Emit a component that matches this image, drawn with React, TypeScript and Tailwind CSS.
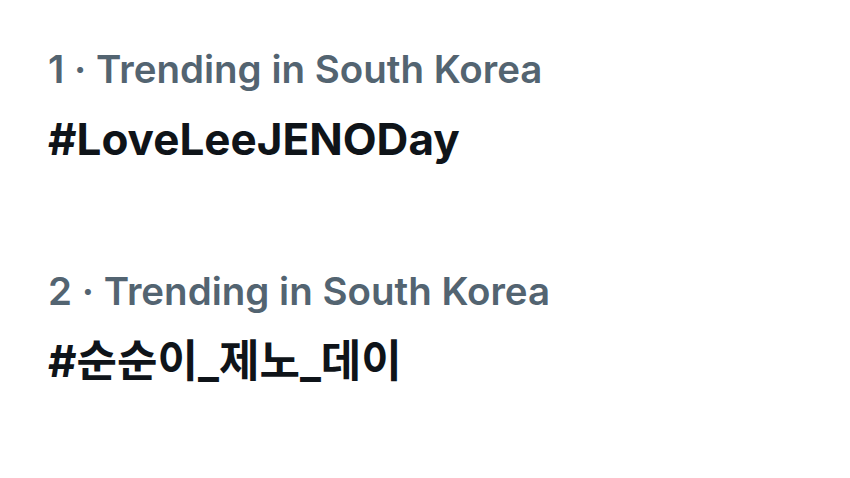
const trends = [
  { rank: 1, tag: "#LoveLeeJENODay" },
  { rank: 2, tag: "#순순이_제노_데이" },
];

export default function App() {
  return (
    <div
      className="w-[850px] h-[478px] bg-white overflow-hidden pl-[48px] pt-[44px] flex flex-col gap-[96px]"
      style={{ fontFamily: 'Inter, "Noto Sans CJK KR", sans-serif' }}
    >
      {trends.map((t) => (
        <div key={t.rank} className="flex flex-col">
          <div className="text-[38.5px] leading-[50px] font-semibold text-[#536471]">
            {t.rank} · Trending in South Korea
          </div>
          <div className="mt-[14px] text-[44px] leading-[62px] font-bold text-[#0f1419]">
            {t.tag}
          </div>
        </div>
      ))}
    </div>
  );
}
